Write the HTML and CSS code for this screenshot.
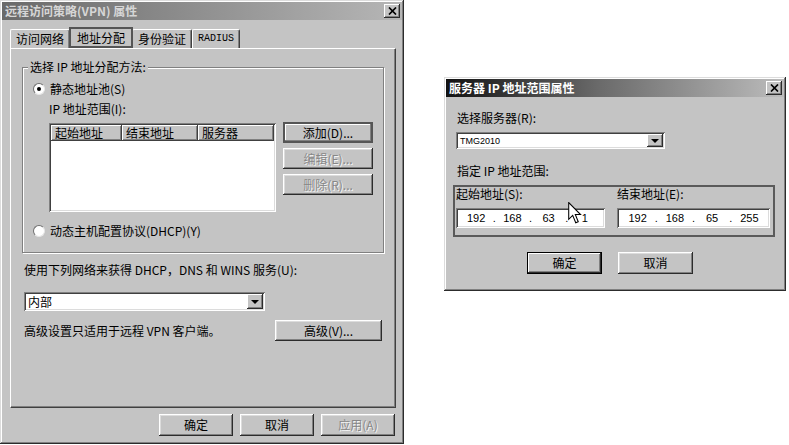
FILE: index.html
```html
<!DOCTYPE html>
<html>
<head>
    <meta charset="utf-8">
    <link rel="stylesheet" href="styles.css">
</head>
<body>
    <div class="desk">
        <div class="win props">
            <div class="titlebar inactive">
                <span>远程访问策略(VPN) 属性</span>
                <span class="close"><svg width="9" height="8" viewBox="0 0 9 8"><path d="M1 0.5L8 7.5M8 0.5L1 7.5" stroke="#000" stroke-width="1.7"/></svg></span>
            </div>
            <div class="tabs">
                <span class="tab">访问网络</span>
                <span class="tab active">地址分配</span>
                <span class="tab">身份验证</span>
                <span class="tab latin">RADIUS</span>
            </div>
            <div class="panel">
                <fieldset class="group">
                    <legend>选择 IP 地址分配方法:</legend>
                    <div class="radio-row"><span class="radio on"></span>静态地址池(S)</div>
                    <div class="sub-label">IP 地址范围(I):</div>
                    <div class="range-row">
                        <div class="listbox">
                            <div class="list-head">
                                <span class="col-start">起始地址</span>
                                <span class="col-end">结束地址</span>
                                <span class="col-server">服务器</span>
                            </div>
                        </div>
                        <div class="side-buttons">
                            <button class="btn focus">添加(D)...</button>
                            <button class="btn" disabled>编辑(E)...</button>
                            <button class="btn" disabled>删除(R)...</button>
                        </div>
                    </div>
                    <div class="radio-row dhcp"><span class="radio"></span>动态主机配置协议(DHCP)(Y)</div>
                </fieldset>
                <div class="net-label">使用下列网络来获得 DHCP，DNS 和 WINS 服务(U):</div>
                <div class="combo net">
                    <span class="combo-value">内部</span>
                    <span class="combo-arrow"></span>
                </div>
                <div class="adv-row">
                    <span>高级设置只适用于远程 VPN 客户端。</span>
                    <button class="btn adv">高级(V)...</button>
                </div>
            </div>
            <div class="footer">
                <button class="btn wide">确定</button>
                <button class="btn wide">取消</button>
                <button class="btn wide" disabled>应用(A)</button>
            </div>
        </div>

        <div class="win range-dlg">
            <div class="titlebar active">
                <span>服务器 IP 地址范围属性</span>
                <span class="close"><svg width="9" height="8" viewBox="0 0 9 8"><path d="M1 0.5L8 7.5M8 0.5L1 7.5" stroke="#000" stroke-width="1.7"/></svg></span>
            </div>
            <div class="dlg-body">
                <div class="lbl first">选择服务器(R):</div>
                <div class="combo server">
                    <span class="combo-value small">TMG2010</span>
                    <span class="combo-arrow"></span>
                </div>
                <div class="lbl">指定 IP 地址范围:</div>
                <div class="range-box">
                    <div class="range-col">
                        <div class="col-label">起始地址(S):</div>
                        <div class="ipfield start">
                            <span class="seg">192</span><span class="dot">.</span>
                            <span class="seg">168</span><span class="dot">.</span>
                            <span class="seg">63</span><span class="dot">.</span>
                            <span class="seg">1</span>
                        </div>
                    </div>
                    <div class="range-col">
                        <div class="col-label">结束地址(E):</div>
                        <div class="ipfield end">
                            <span class="seg">192</span><span class="dot">.</span>
                            <span class="seg">168</span><span class="dot">.</span>
                            <span class="seg">65</span><span class="dot">.</span>
                            <span class="seg">255</span>
                        </div>
                    </div>
                </div>
                <div class="dlg-buttons">
                    <button class="btn default">确定</button>
                    <button class="btn">取消</button>
                </div>
            </div>
            <!-- mouse pointer over the start address -->
            <svg class="cursor" width="14" height="22" viewBox="0 0 13 21">
                <path d="M0.5 0.5L0.5 16.5L4.3 12.8L7.2 19.8L9.6 18.8L6.8 12L11.8 12Z" fill="#fff" stroke="#000" stroke-width="1" stroke-linejoin="miter"/>
            </svg>
        </div>
    </div>
</body>
</html>
```

FILE: styles.css
```css
* {
    box-sizing: border-box;
}
body {
    margin: 0;
    background: #fff;
    font-family: "Noto Sans CJK SC", sans-serif;
    font-size: 12px;
    line-height: 14px;
    color: #000;
}
.desk {
    display: flex;
    align-items: flex-start;
    gap: 40px;
}
.win {
    position: relative;
    background: #c4c4c4;
    padding: 2px;
    box-shadow: inset -1px -1px #2c2c2c, inset 1px 1px #dcdcdc,
        inset -2px -2px #808080, inset 2px 2px #fff;
}
.props {
    width: 404px;
    height: 444px;
}
.range-dlg {
    width: 342px;
    height: 214px;
    margin-top: 77px;
}

/* title bars */
.titlebar {
    height: 18px;
    display: flex;
    align-items: center;
    justify-content: space-between;
    padding: 0 2px 0 3px;
    font-weight: bold;
    font-size: 12px;
}
.titlebar.inactive {
    background: linear-gradient(to right, #6a6a6a, #b6b6b6);
    color: #d6d6d6;
}
.titlebar.active {
    background: linear-gradient(to right, #121212, #6a6a6a 45%, #bcbcbc);
    color: #fff;
}
.close {
    width: 16px;
    height: 14px;
    display: flex;
    align-items: center;
    justify-content: center;
    background: #c4c4c4;
    box-shadow: inset -1px -1px #2c2c2c, inset 1px 1px #fff, inset -2px -2px #808080;
}

/* tabs */
.tabs {
    display: flex;
    align-items: flex-end;
    height: 28px;
    margin-left: 8px;
}
.tab {
    height: 19px;
    padding: 0 5px;
    line-height: 17px;
    border: 1px solid;
    border-color: #fff #404040 transparent #fff;
    border-bottom: none;
    border-radius: 2px 2px 0 0;
    box-shadow: inset -1px 0 #808080;
}
.tab.latin {
    font-family: "Liberation Mono", monospace;
    font-size: 10px;
    letter-spacing: 0;
}
.tab.active {
    position: relative;
    z-index: 1;
    height: 21px;
    margin: 0 -1px 0 -1px;
    padding: 0 6px;
    line-height: 17px;
    background: #c4c4c4;
    border: 2px solid #555;
    border-radius: 0;
    box-shadow: none;
}

/* property page */
.panel {
    height: 360px;
    margin: 0 6px 0 8px;
    padding: 11px 13px 0 11px;
    border: 1px solid;
    border-color: #fff #404040 #404040 #fff;
    box-shadow: inset -1px -1px #808080;
}
.group {
    margin: 0;
    padding: 8px 10px 14px 10px;
    border: 1px solid #808080;
    box-shadow: inset 1px 1px #fff, 1px 1px #fff;
}
.group legend {
    padding: 0 2px;
    margin-left: -5px;
    background: #c4c4c4;
    line-height: 14px;
}
.radio-row {
    display: flex;
    align-items: center;
    height: 14px;
}
.radio-row.dhcp {
    margin-top: 12px;
}
.radio {
    width: 12px;
    height: 12px;
    margin-right: 5px;
    display: flex;
    align-items: center;
    justify-content: center;
    border-radius: 50%;
    background: #fff;
    border: 1px solid;
    border-color: #707070 #e6e6e6 #e6e6e6 #707070;
}
.radio.on::after {
    content: "";
    width: 4px;
    height: 4px;
    border-radius: 50%;
    background: #000;
}
.sub-label {
    margin: 6px 0 0 16px;
}
.range-row {
    display: flex;
    align-items: flex-start;
    gap: 7px;
    margin: 7px 0 0 16px;
}
.listbox {
    width: 227px;
    height: 89px;
    padding: 2px;
    background: #fff;
    box-shadow: inset 1px 1px #808080, inset -1px -1px #fff,
        inset 2px 2px #404040, inset -2px -2px #dcdcdc;
}
.list-head {
    display: flex;
    height: 16px;
}
.list-head span {
    height: 16px;
    padding-left: 4px;
    line-height: 15px;
    background: #c4c4c4;
    box-shadow: inset -1px -1px #404040, inset 1px 1px #fff, inset -2px -2px #808080;
}
.col-start {
    width: 71px;
}
.col-end {
    width: 76px;
}
.col-server {
    width: 76px;
}
.side-buttons {
    display: flex;
    flex-direction: column;
    gap: 5px;
    margin-top: -1px;
}
.side-buttons .btn {
    width: 90px;
}

/* buttons */
.btn {
    height: 21px;
    padding: 0;
    font: inherit;
    color: #000;
    background: #c4c4c4;
    border: none;
    box-shadow: inset -1px -1px #2c2c2c, inset 1px 1px #fff,
        inset -2px -2px #808080, inset 2px 2px #dcdcdc;
}
.btn:disabled {
    color: #878787;
    text-shadow: 1px 1px #f4f4f4;
}
.btn.focus {
    box-shadow: inset 0 0 0 2px #555, inset -3px -3px #808080, inset 3px 3px #fff;
}
.btn.default {
    box-shadow: inset 0 0 0 1px #000, inset -2px -2px #2c2c2c, inset 2px 2px #fff,
        inset -3px -3px #808080;
}
.btn.adv {
    width: 107px;
}
.btn.wide {
    width: 74px;
    height: 22px;
}

.net-label {
    margin: 10px 0 0 2px;
}
.combo {
    display: flex;
    align-items: center;
    padding: 2px;
    background: #fff;
    box-shadow: inset 1px 1px #808080, inset -1px -1px #fff,
        inset 2px 2px #404040, inset -2px -2px #dcdcdc;
}
.combo.net {
    width: 241px;
    height: 19px;
    margin: 15px 0 0 2px;
}
.combo-value {
    flex: 1;
    padding-left: 2px;
    line-height: 14px;
}
.combo-value.small {
    font-family: "Liberation Sans", sans-serif;
    font-size: 9px;
}
.combo-arrow {
    width: 16px;
    height: 15px;
    display: flex;
    align-items: center;
    justify-content: center;
    background: #c4c4c4;
    box-shadow: inset -1px -1px #2c2c2c, inset 1px 1px #fff, inset -2px -2px #808080;
}
.combo-arrow::after {
    content: "";
    border: 4px solid transparent;
    border-top-color: #000;
    border-bottom: 0;
}
.adv-row {
    display: flex;
    align-items: center;
    justify-content: space-between;
    margin: 9px 0 0 2px;
}
.footer {
    display: flex;
    justify-content: flex-end;
    gap: 7px;
    margin-top: 6px;
    padding-right: 7px;
}

/* server range dialog */
.dlg-body {
    padding-left: 7px;
}
.lbl {
    margin: 15px 0 0 4px;
}
.lbl.first {
    margin-top: 14px;
}
.combo.server {
    width: 209px;
    height: 17px;
    margin: 7px 0 0 3px;
}
.combo.server .combo-arrow {
    height: 13px;
}
.range-box {
    display: flex;
    gap: 12px;
    width: 322px;
    height: 52px;
    margin-top: 7px;
    padding: 0 0 0 1px;
    border: 2px solid #5a5a5a;
}
.col-label {
    line-height: 13px;
}
.ipfield {
    display: flex;
    align-items: center;
    height: 20px;
    margin-top: 8px;
    padding: 0 2px;
    background: #fff;
    font-family: "Liberation Sans", sans-serif;
    font-size: 11px;
    box-shadow: inset 1px 1px #808080, inset -1px -1px #fff,
        inset 2px 2px #404040, inset -2px -2px #dcdcdc;
}
.ipfield.start {
    width: 149px;
}
.ipfield.end {
    width: 153px;
}
.seg {
    flex: 1;
    text-align: center;
}
.dot {
    width: 0;
    display: flex;
    justify-content: center;
}
.dlg-buttons {
    display: flex;
    gap: 16px;
    margin-top: 15px;
    padding-left: 74px;
}
.dlg-buttons .btn {
    width: 75px;
    height: 22px;
}
.cursor {
    position: absolute;
    left: 124px;
    top: 125px;
}
```
